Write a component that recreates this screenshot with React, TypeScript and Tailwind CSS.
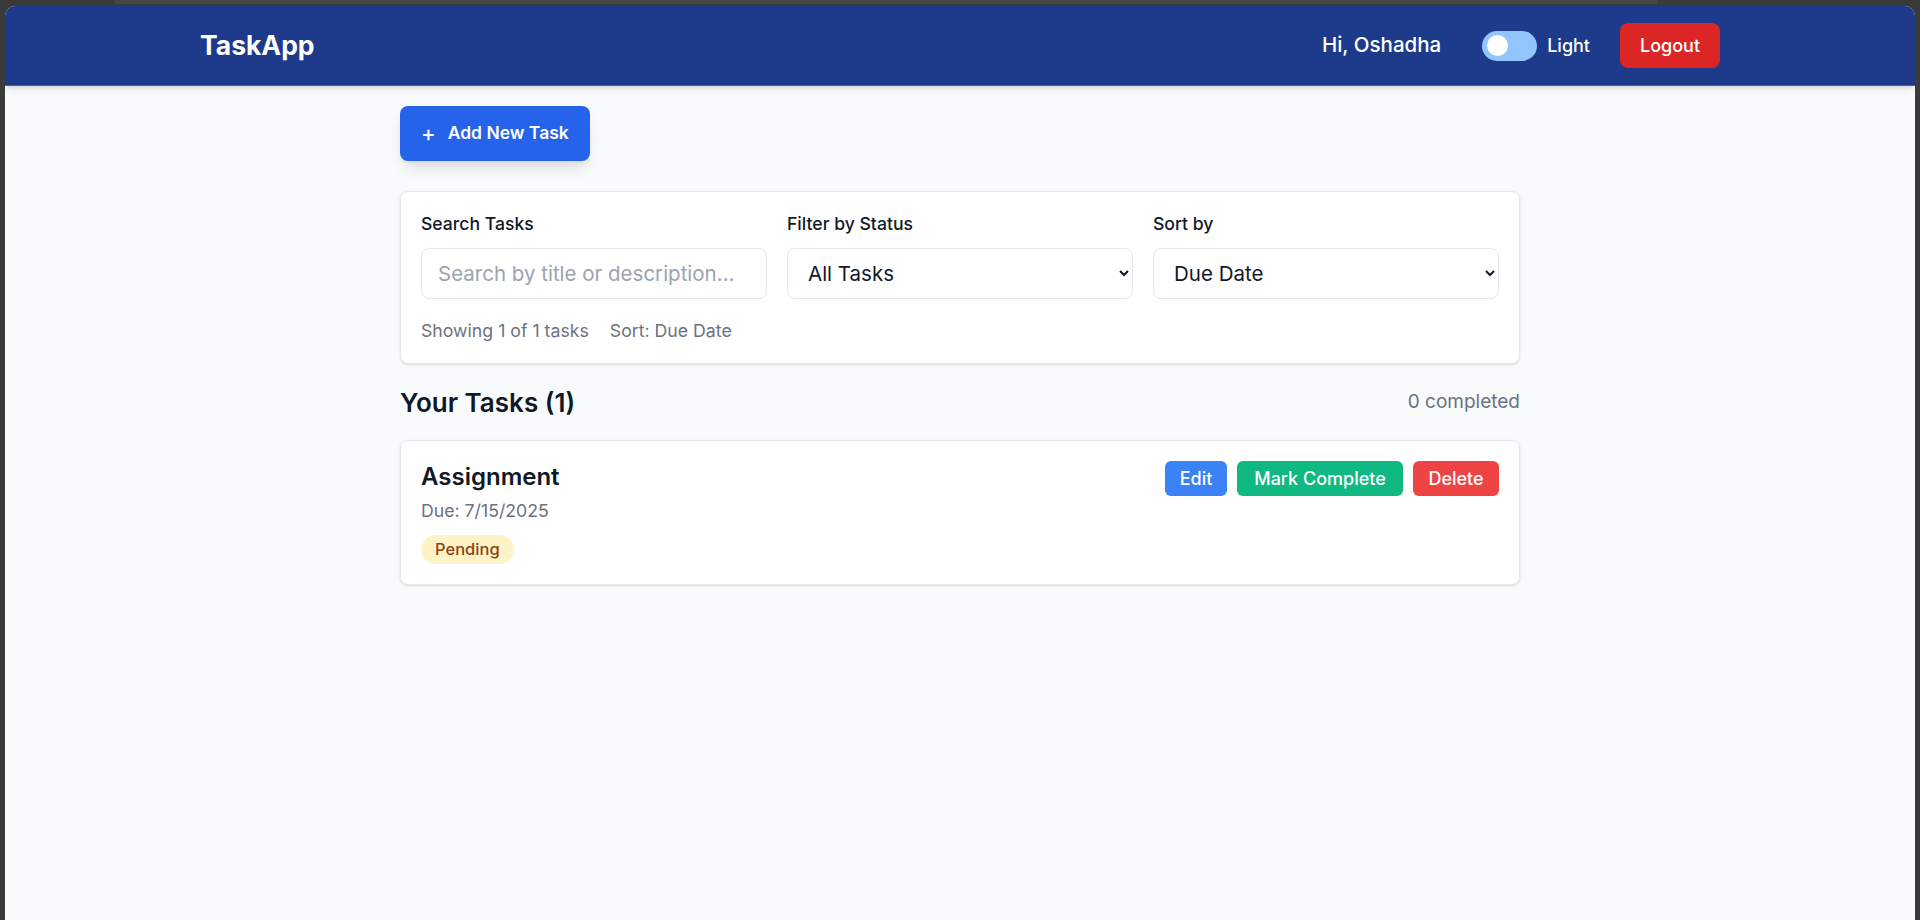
import React, { useState } from 'react';

type Task = {
  id: number;
  title: string;
  due: string;
  status: 'Pending' | 'Completed';
};

const App = () => {
  const [search, setSearch] = useState('');
  const [status, setStatus] = useState('all');
  const [sortBy, setSortBy] = useState('dueDate');
  const [light, setLight] = useState(true);
  const [tasks] = useState<Task[]>([
    { id: 1, title: 'Assignment', due: '7/15/2025', status: 'Pending' }
  ]);

  const font = { fontFamily: 'Inter, "Noto Sans", sans-serif' };

  return (
    <div className="h-screen flex flex-col bg-[#3a3a3a] px-[5px] overflow-hidden" style={font}>
      {/* window chrome strip */}
      <div className="h-[6px] shrink-0">
        <div className="ml-[110px] w-[1543px] h-[4px] bg-[#474747]" />
      </div>

      <div className="flex-1 flex flex-col rounded-t-[10px] overflow-hidden bg-[#f9fafb]">
        {/* Header */}
        <header className="relative z-10 h-20 shrink-0 bg-[#1e3a8a] border-b border-[#2563eb] shadow-md">
          <div className="mx-auto max-w-[1536px] h-full px-2 flex items-center justify-between">
            <h1 className="text-[26.5px] font-bold text-white">TaskApp</h1>
            <div className="flex items-center">
              <span className="text-[20.5px] font-medium text-white">Hi, Oshadha</span>
              <button
                className="ml-[41px] w-[55px] h-[30px] rounded-full bg-[#93c5fd] flex items-center px-[5px]"
                onClick={() => setLight(!light)}
              >
                <span className="w-[21px] h-[21px] rounded-full bg-white" />
              </button>
              <span className="ml-[10px] text-[18px] font-medium text-white">Light</span>
              <button className="ml-[30px] h-[45px] w-[100px] rounded-lg bg-[#dc2626] text-white text-[18px] font-medium">
                Logout
              </button>
            </div>
          </div>
        </header>

        {/* Main */}
        <main className="flex-1">
          <div className="max-w-6xl mx-auto px-4 pt-5">
            <button className="h-[55px] w-[190px] rounded-lg bg-[#2563eb] text-white shadow-lg flex items-center pl-[21px]">
              <span className="text-[22px] leading-none font-medium mr-[12px] -mt-[2px]">+</span>
              <span className="text-[17.5px] font-semibold">Add New Task</span>
            </button>

            {/* Filters */}
            <div className="mt-[30px] bg-white border border-[#e5e7eb] rounded-lg shadow-sm p-5">
              <div className="grid grid-cols-3 gap-5">
                <div>
                  <label className="block text-[17.6px] leading-6 font-medium text-[#111827] mb-3">Search Tasks</label>
                  <input
                    type="text"
                    value={search}
                    onChange={(e) => setSearch(e.target.value)}
                    placeholder="Search by title or description..."
                    className="w-full h-[51px] px-4 border border-[#e5e7eb] rounded-lg text-[20.5px] text-[#111827] placeholder-[#9ca3af] outline-none"
                  />
                </div>
                <div>
                  <label className="block text-[17.6px] leading-6 font-medium text-[#111827] mb-3">Filter by Status</label>
                  <select
                    value={status}
                    onChange={(e) => setStatus(e.target.value)}
                    className="w-full h-[51px] px-4 border border-[#e5e7eb] rounded-lg text-[20.5px] text-[#111827] bg-white outline-none"
                  >
                    <option value="all">All Tasks</option>
                    <option value="pending">Pending</option>
                    <option value="completed">Completed</option>
                  </select>
                </div>
                <div>
                  <label className="block text-[17.6px] leading-6 font-medium text-[#111827] mb-3">Sort by</label>
                  <select
                    value={sortBy}
                    onChange={(e) => setSortBy(e.target.value)}
                    className="w-full h-[51px] px-4 border border-[#e5e7eb] rounded-lg text-[20.5px] text-[#111827] bg-white outline-none"
                  >
                    <option value="dueDate">Due Date</option>
                    <option value="title">Title</option>
                    <option value="status">Status</option>
                  </select>
                </div>
              </div>
              <div className="mt-5 flex items-center gap-[21px] text-[17.7px] leading-6 text-[#6b7280]">
                <span>Showing {tasks.length} of {tasks.length} tasks</span>
                <span>Sort: Due Date</span>
              </div>
            </div>

            {/* Task list heading */}
            <div className="mt-[22px] h-8 flex items-center justify-between">
              <h2 className="text-[26px] font-semibold text-[#111827]">Your Tasks ({tasks.length})</h2>
              <span className="text-[19px] text-[#6b7280]">0 completed</span>
            </div>

            {/* Tasks */}
            <div className="mt-[22px] space-y-4">
              {tasks.map((task) => (
                <div key={task.id} className="bg-white border border-[#e5e7eb] rounded-lg shadow-sm p-5">
                  <div className="flex items-start justify-between">
                    <div>
                      <h3 className="text-[24px] leading-8 font-semibold text-[#111827]">{task.title}</h3>
                      <p className="mt-[6px] text-[17.7px] leading-6 text-[#6b7280]">Due: {task.due}</p>
                      <span className="mt-3 inline-flex items-center h-[29px] px-[14px] rounded-full bg-[#fef3c7] text-[#92400e] text-[16.5px] font-medium">
                        {task.status}
                      </span>
                    </div>
                    <div className="flex items-center gap-2.5">
                      <button className="h-[35px] w-[62px] rounded-md bg-[#3b82f6] text-white text-[18px] font-medium">Edit</button>
                      <button className="h-[35px] w-[166px] rounded-md bg-[#10b981] text-white text-[18px] font-medium">Mark Complete</button>
                      <button className="h-[35px] w-[86px] rounded-md bg-[#ef4444] text-white text-[18px] font-medium">Delete</button>
                    </div>
                  </div>
                </div>
              ))}
            </div>
          </div>
        </main>
      </div>
    </div>
  );
};

export default App;
